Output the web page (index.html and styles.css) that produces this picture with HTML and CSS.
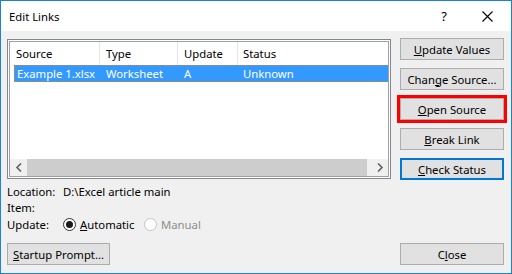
FILE: index.html
```html
<!DOCTYPE html>
<html lang="en">
<head>
  <meta charset="UTF-8">
  <title>Edit Links</title>
  <link rel="stylesheet" href="styles.css">
</head>
<body>
  <div class="window">
    <!-- Title bar -->
    <div class="titlebar">
      <span class="title">Edit Links</span>
      <span class="help">?</span>
      <svg class="close-x" width="11" height="11" viewBox="0 0 11 11">
        <path d="M0.5 0.5 L10.5 10.5 M10.5 0.5 L0.5 10.5" stroke="#000" stroke-width="1.1" fill="none"/>
      </svg>
    </div>

    <div class="content">
      <div class="top-row">
        <!-- Links list -->
        <div class="listbox">
          <div class="list-inner">
            <div class="list-header">
              <div class="hcell c1">Source</div>
              <div class="hcell c2">Type</div>
              <div class="hcell c3">Update</div>
              <div class="hcell c4">Status</div>
            </div>
            <div class="list-row selected">
              <div class="rcell r1">Example 1.xlsx</div>
              <div class="rcell r2">Worksheet</div>
              <div class="rcell r3">A</div>
              <div class="rcell r4">Unknown</div>
            </div>
            <div class="list-space"></div>
            <div class="hscroll">
              <div class="arrow">
                <svg width="8" height="9" viewBox="0 0 8 9"><path d="M6 0.5 L2 4.5 L6 8.5" stroke="#606060" stroke-width="1.6" fill="none"/></svg>
              </div>
              <div class="thumb"></div>
              <div class="arrow">
                <svg width="8" height="9" viewBox="0 0 8 9"><path d="M2 0.5 L6 4.5 L2 8.5" stroke="#606060" stroke-width="1.6" fill="none"/></svg>
              </div>
            </div>
          </div>
        </div>

        <!-- Side buttons -->
        <div class="side-buttons">
          <button class="btn"><u>U</u>pdate Values</button>
          <button class="btn">Chan<u>g</u>e Source...</button>
          <div class="highlight">
            <button class="btn"><u>O</u>pen Source</button>
          </div>
          <button class="btn"><u>B</u>reak Link</button>
          <button class="btn default"><u>C</u>heck Status</button>
        </div>
      </div>

      <!-- Link details -->
      <div class="info">
        <div class="info-row loc">
          <span class="label">Location:</span>
          <span>D:\Excel article main</span>
        </div>
        <div class="info-row item">
          <span class="label">Item:</span>
        </div>
        <div class="info-row upd">
          <span class="label">Update:</span>
          <span class="radio checked"></span>
          <span class="radio-text auto"><u>A</u>utomatic</span>
          <span class="radio disabled"></span>
          <span class="radio-text disabled-text">Manual</span>
        </div>
      </div>

      <div class="bottom-row">
        <button class="btn startup"><u>S</u>tartup Prompt...</button>
        <button class="btn">C<u>l</u>ose</button>
      </div>
    </div>
  </div>
</body>
</html>
```

FILE: styles.css
```css
body {
  margin: 0;
  background: #fff;
  font-family: "Noto Sans", "Open Sans", sans-serif;
  font-size: 11.3px;
  color: #000;
}

.window {
  width: 512px;
  height: 274px;
  box-sizing: border-box;
  border: 1px solid #1883d7;
  background: #f0f0f0;
  display: flex;
  flex-direction: column;
}

/* Title bar */
.titlebar {
  height: 30px;
  background: #fff;
  display: flex;
  align-items: center;
  padding-left: 8px;
}

.title {
  flex: 1;
  color: #000;
}

.help {
  font-size: 13px;
  margin-right: 35px;
}

.close-x {
  margin-right: 18px;
}

/* Content */
.content {
  flex: 1;
  display: flex;
  flex-direction: column;
  padding: 7px 7px 8px 6px;
}

.top-row {
  display: flex;
  gap: 9px;
}

/* List box */
.listbox {
  width: 384px;
  height: 140px;
  box-sizing: border-box;
  margin-top: 1px;
  border: 1px solid #828790;
  background: #fff;
  padding: 1px;
}

.list-inner {
  height: 100%;
  box-sizing: border-box;
  border: 1px solid #a0a0a0;
  display: flex;
  flex-direction: column;
}

.list-header {
  display: flex;
  height: 23px;
  align-items: stretch;
}

.hcell {
  display: flex;
  align-items: center;
  padding-left: 6px;
  box-sizing: border-box;
  border-right: 1px solid #e5e5e5;
}

.c1 { width: 90px; }
.c2 { width: 78px; }
.c3 { width: 60px; }
.c4 { flex: 1; border-right: none; padding-left: 5px; }

.list-row {
  display: flex;
  height: 17px;
  align-items: center;
  margin-left: 4px;
  box-sizing: border-box;
}

.list-row.selected {
  background: #3399ff;
  color: #fff;
  border: 1px dotted #d9822b;
  border-right-color: #3399ff;
}

.rcell { box-sizing: border-box; }
.r1 { width: 85px; padding-left: 2px; }
.r2 { width: 78px; padding-left: 6px; }
.r3 { width: 60px; padding-left: 6px; }
.r4 { flex: 1; padding-left: 5px; }

.list-space {
  flex: 1;
}

/* Horizontal scrollbar */
.hscroll {
  height: 17px;
  display: flex;
  background: #f0f0f0;
}

.arrow {
  width: 17px;
  display: flex;
  align-items: center;
  justify-content: center;
}

.thumb {
  flex: 1;
  background: #cdcdcd;
  margin-right: 4px;
}

/* Buttons */
.side-buttons {
  width: 104px;
  display: flex;
  flex-direction: column;
  gap: 8px;
}

.btn {
  height: 22px;
  width: 104px;
  box-sizing: border-box;
  border: 1px solid #adadad;
  background: #e1e1e1;
  font-family: "Noto Sans", "Open Sans", sans-serif;
  font-size: 11.3px;
  color: #000;
  padding: 0;
}

.btn.default {
  border: 2px solid #0078d7;
}

.highlight {
  margin: -3px;
  border: 3px solid #ff0000;
  line-height: 0;
  background: #f0f0f0;
}

/* Link details */
.info {
  margin-top: 4px;
}

.info-row {
  display: flex;
  align-items: center;
}

.loc { height: 15px; }
.item { height: 16px; }
.upd { height: 18px; }

.label {
  width: 56px;
  flex-shrink: 0;
}

.radio {
  width: 13px;
  height: 13px;
  flex-shrink: 0;
  box-sizing: border-box;
  border-radius: 50%;
  border: 1px solid #333;
  background: #fff;
  display: flex;
  align-items: center;
  justify-content: center;
  margin-right: 4px;
}

.radio.checked::after {
  content: "";
  width: 7px;
  height: 7px;
  border-radius: 50%;
  background: #1a1a1a;
}

.radio.disabled {
  border-color: #c4c4c4;
}

.radio-text.auto {
  width: 64px;
}

.disabled-text {
  color: #8d8d8d;
}

.bottom-row {
  margin-top: auto;
  display: flex;
  justify-content: space-between;
}

.startup {
  width: 103px;
}
```
